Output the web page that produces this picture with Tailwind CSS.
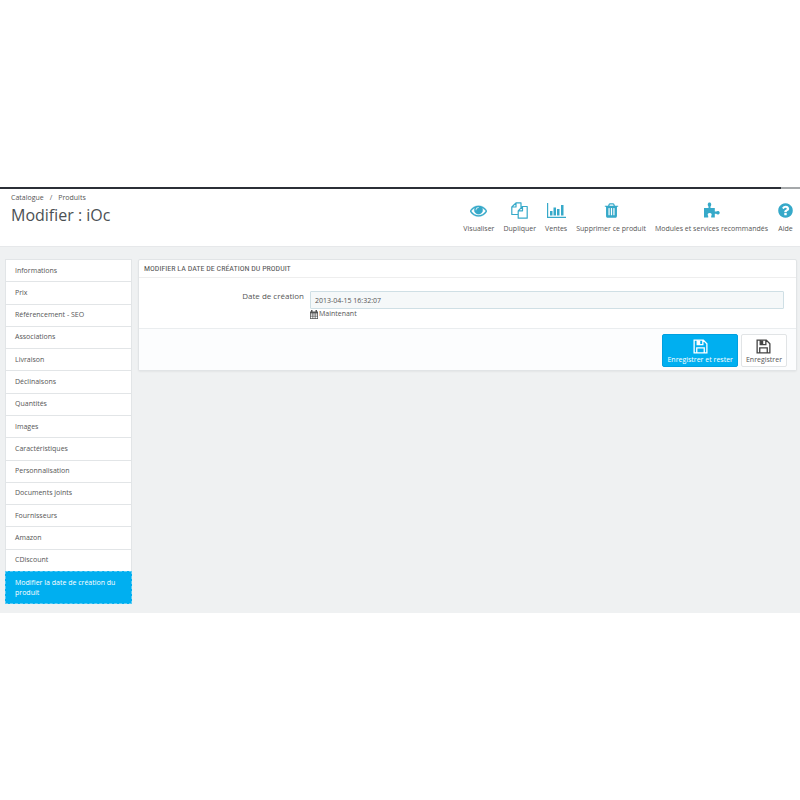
<!DOCTYPE html>
<html lang="fr">
<head>
  <meta charset="UTF-8" />
  <meta name="viewport" content="width=device-width, initial-scale=1.0" />
  <title>Modifier : iOc</title>
  <script src="https://cdn.jsdelivr.net/npm/@tailwindcss/browser@4"></script>
</head>

<body class="bg-white font-['Open_Sans',sans-serif] text-[7px] leading-[10px] text-[#555]">
  <!-- Page -->
  <div class="mt-[187px] bg-[#eff1f2] pb-[9px]">
    <!-- Top Bar -->
    <div class="flex h-[2px] bg-[#a5a8aa]">
      <div class="w-[781px] bg-[#2b2f36]"></div>
    </div>

    <!-- Header -->
    <header class="flex justify-between bg-white border-b border-[#e6e8ea] h-[58px] pl-[11px] pr-[6px]">
      <div class="pt-[4px]">
        <nav class="flex gap-[6px]" aria-label="Fil d'Ariane">
          <a href="#">Catalogue</a>
          <span>/</span>
          <a href="#">Produits</a>
        </nav>
        <h1 class="mt-[2px] text-[16px] leading-[20px] text-[#4b5054]">Modifier : iOc</h1>
      </div>

      <!-- Toolbar -->
      <nav class="flex gap-[9px] pt-[13px]" aria-label="Actions">
        <a href="#" class="flex flex-col items-center gap-[5px]">
          <svg class="w-[17px] h-[17px] fill-[#36a9c9] stroke-[#36a9c9]" viewBox="0 0 1792 1792" stroke-width="30" aria-hidden="true"><path d="M1664 960q-152-236-381-353 61 104 61 225 0 185-131.5 316.5t-316.5 131.5-316.5-131.5-131.5-316.5q0-121 61-225-229 117-381 353 133 205 333.5 326.5t434.5 121.5 434.5-121.5 333.5-326.5zm-720-384q0-20-14-34t-34-14q-125 0-214.5 89.5t-89.5 214.5q0 20 14 34t34 14 34-14 14-34q0-86 61-147t147-61q20 0 34-14t14-34zm848 384q0 34-20 69-140 230-376.5 368.5t-499.5 138.5-499.5-139-376.5-368q-20-35-20-69t20-69q140-229 376.5-368t499.5-139 499.5 139 376.5 368q20 35 20 69z"/></svg>
          Visualiser
        </a>
        <a href="#" class="flex flex-col items-center gap-[5px]">
          <svg class="w-[17px] h-[17px] fill-none stroke-[#36a9c9]" viewBox="0 0 17 17" stroke-width="1.2" stroke-linejoin="round" aria-hidden="true"><path d="M7 12.500H.8V5L5 .8H10V4.500M5 .8V5H.8M11.500 4.500H16.200V16.200H7.200V8.800zM11.500 4.500V8.800H7.200M10 4.500V6"/></svg>
          Dupliquer
        </a>
        <a href="#" class="flex flex-col items-center gap-[5px]">
          <svg class="w-[19px] h-[17px] fill-[#36a9c9]" viewBox="0 0 19 17" aria-hidden="true"><path d="M0 1h1.200v13.800H19V16H0zM3 9h2.500v4.500H3zM6.500 5.500H9v8H6.500zM10 7h2.500v6.500H10zM14 3h2.500v10.500H14z"/></svg>
          Ventes
        </a>
        <a href="#" class="flex flex-col items-center gap-[5px]">
          <svg class="w-[17px] h-[17px] fill-[#36a9c9]" viewBox="0 0 1792 1792" aria-hidden="true"><path d="M704 1376v-704q0-14-9-23t-23-9h-64q-14 0-23 9t-9 23v704q0 14 9 23t23 9h64q14 0 23-9t9-23zm256 0v-704q0-14-9-23t-23-9h-64q-14 0-23 9t-9 23v704q0 14 9 23t23 9h64q14 0 23-9t9-23zm256 0v-704q0-14-9-23t-23-9h-64q-14 0-23 9t-9 23v704q0 14 9 23t23 9h64q14 0 23-9t9-23zm-544-992h448l-48-117q-7-9-17-11h-317q-10 2-17 11zm928 32v64q0 14-9 23t-23 9h-96v948q0 83-47 143.5t-113 60.5h-832q-66 0-113-58.5t-47-141.5v-952h-96q-14 0-23-9t-9-23v-64q0-14 9-23t23-9h309l70-167q15-37 54-63t79-26h320q40 0 79 26t54 63l70 167h309q14 0 23 9t9 23z"/></svg>
          Supprimer ce produit
        </a>
        <a href="#" class="flex flex-col items-center gap-[5px]">
          <svg class="w-[17px] h-[17px] fill-[#36a9c9]" viewBox="0 0 17 17" aria-hidden="true"><path d="M1 6h4.500V4.400C4.300 3.200 4.500.5 6.500.5s2.200 2.700 1 3.900V6h4.300v3.600h1.400c1.200-1.300 3.500-.8 3.500 1.100s-2.300 2.400-3.500 1.100h-1.400V15.500H8.200v-1.400c1-1.200.6-3-1.500-3s-2.500 1.800-1.500 3v1.400H1z"/></svg>
          Modules et services recommandés
        </a>
        <a href="#" class="flex flex-col items-center gap-[5px]">
          <svg class="w-[17px] h-[17px] fill-[#36a9c9]" viewBox="0 0 1792 1792" aria-hidden="true"><path d="M1024 1376v-192q0-14-9-23t-23-9h-192q-14 0-23 9t-9 23v192q0 14 9 23t23 9h192q14 0 23-9t9-23zm256-672q0-88-55.5-163t-138.5-116-170-41q-243 0-371 213-15 24 8 42l132 100q7 6 19 6 16 0 25-12 53-68 86-92 34-24 86-24 48 0 85.5 26t37.5 59q0 38-20 61t-68 45q-63 28-115.5 86.5t-52.5 125.5v36q0 14 9 23t23 9h192q14 0 23-9t9-23q0-19 21.500-49.500t54.500-49.500q32-18 49-28.500t46-35 44.500-48 28-60.500 12.500-81zm384 192q0 209-103 385.500t-279.500 279.500-385.500 103-385.500-103-279.500-279.500-103-385.500 103-385.500 279.500-279.500 385.500-103 385.500 103 279.500 279.500 103 385.500z"/></svg>
          Aide
        </a>
      </nav>
    </header>

    <div class="flex items-start gap-[6px] pt-[12px] pl-[5px] pr-[3px]">
      <!-- Product Tabs -->
      <nav class="w-[127px] shrink-0" aria-label="Fiche produit">
        <div class="grid min-h-[312px] bg-white border border-b-0 border-[#e2e5e7] divide-y divide-[#e2e5e7]">
          <a href="#" class="flex items-center px-[9px]">Informations</a>
          <a href="#" class="flex items-center px-[9px]">Prix</a>
          <a href="#" class="flex items-center px-[9px]">Référencement - SEO</a>
          <a href="#" class="flex items-center px-[9px]">Associations</a>
          <a href="#" class="flex items-center px-[9px]">Livraison</a>
          <a href="#" class="flex items-center px-[9px]">Déclinaisons</a>
          <a href="#" class="flex items-center px-[9px]">Quantités</a>
          <a href="#" class="flex items-center px-[9px]">Images</a>
          <a href="#" class="flex items-center px-[9px]">Caractéristiques</a>
          <a href="#" class="flex items-center px-[9px]">Personnalisation</a>
          <a href="#" class="flex items-center px-[9px]">Documents joints</a>
          <a href="#" class="flex items-center px-[9px]">Fournisseurs</a>
          <a href="#" class="flex items-center px-[9px]">Amazon</a>
          <a href="#" class="flex items-center px-[9px]">CDiscount</a>
        </div>
        <a href="#" aria-current="page" class="block bg-[#00aff0] border border-dashed border-[#5ccbf4] px-[9px] pt-[6px] pb-[5px] text-white">Modifier la date de création du produit</a>
      </nav>

      <!-- Panel -->
      <form class="flex-1 bg-white border border-[#e1e4e6] rounded-[2px] shadow-xs">
        <h2 class="border-b border-[#eee] px-[5px] pt-[4px] pb-[3px] font-['Roboto_Condensed','Open_Sans_Condensed','Roboto',sans-serif] text-[8px] leading-[10px]">MODIFIER LA DATE DE CRÉATION DU PRODUIT</h2>
        <div class="flex gap-[6px] pt-[13px] pr-[12px] pb-[6px]">
          <label for="date" class="w-[165px] shrink-0 text-right text-[8px]">Date de création</label>
          <div class="flex-1">
            <input id="date" type="text" value="2013-04-15 16:32:07" class="block w-full h-[18px] bg-[#f5f8f9] border border-[#cfdfe5] rounded-[1px] px-[4px]" />
            <a href="#" class="inline-flex items-center gap-[1px]">
              <svg class="w-[8px] h-[9px] fill-[#555]" viewBox="0 0 16 18" aria-hidden="true"><path fill-rule="evenodd" d="M0 3h2V0h3v3h6V0h3v3h2v15H0zM1.500 7v2.500h2.500V7zM5 7v2.500h2.500V7zM8.500 7v2.500H11V7zM12 7v2.500h2.500V7zM1.500 10.500V13h2.500v-2.500zM5 10.500V13h2.500v-2.500zM8.500 10.500V13H11v-2.500zM12 10.500V13h2.500v-2.500zM1.500 14v2.500h2.500V14zM5 14v2.500h2.500V14zM8.500 14v2.500H11V14zM12 14v2.500h2.500V14z"/></svg>
              Maintenant
            </a>
          </div>
        </div>
        <div class="flex justify-end gap-[3px] bg-[#fcfdfe] border-t border-[#eaedef] pt-[5px] pr-[9px] pb-[3px]">
          <button type="submit" class="flex flex-col items-center gap-[1px] bg-[#00aff0] border border-[#00a0e0] rounded-[2px] px-[4px] pt-[4px] pb-[1px] text-white">
            <svg class="w-[15px] h-[15px] fill-none stroke-white" viewBox="0 0 16 16" stroke-width="1.400" aria-hidden="true"><path d="M1.200 1.200H11L14.800 5V14.800H1.200zM4 14.500V9.500H12V14.500M4.500 1.500V6H10.500V1.500"/><path class="fill-white" stroke="none" d="M4.500 1.500h3.200V6H4.500z"/></svg>
            Enregistrer et rester
          </button>
          <button type="submit" class="flex flex-col items-center gap-[1px] bg-white border border-[#e1e4e6] rounded-[2px] px-[4px] pt-[4px] pb-[1px]">
            <svg class="w-[15px] h-[15px] fill-none stroke-[#444]" viewBox="0 0 16 16" stroke-width="1.400" aria-hidden="true"><path d="M1.200 1.200H11L14.800 5V14.800H1.200zM4 14.500V9.500H12V14.500M4.500 1.500V6H10.500V1.500"/><path class="fill-[#444]" stroke="none" d="M4.500 1.500h3.200V6H4.500z"/></svg>
            Enregistrer
          </button>
        </div>
      </form>
    </div>
  </div>
</body>
</html>
